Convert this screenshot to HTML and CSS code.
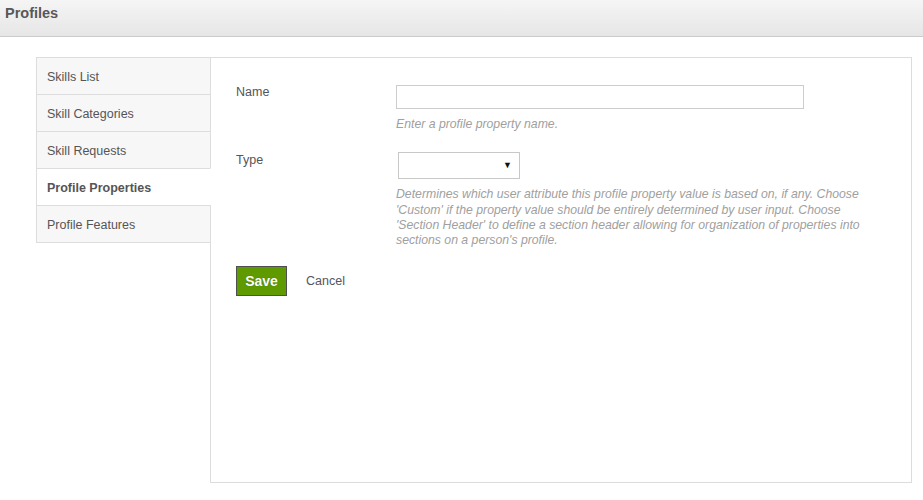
FILE: index.html
```html
<!DOCTYPE html>
<html>
<head>
<meta charset="utf-8">
<title>Profiles</title>
<link rel="stylesheet" href="styles.css">
</head>
<body>
<header class="page-header">
  <h1 class="page-title">Profiles</h1>
</header>
<div class="layout">
  <nav class="tabs">
    <a class="tab">Skills List</a>
    <a class="tab">Skill Categories</a>
    <a class="tab">Skill Requests</a>
    <a class="tab tab-active">Profile Properties</a>
    <a class="tab">Profile Features</a>
  </nav>
  <section class="panel">
    <div class="form-row row-name">
      <label class="field-label">Name</label>
      <div class="field">
        <input class="text-input" type="text">
        <div class="hint">Enter a profile property name.</div>
      </div>
    </div>
    <div class="form-row row-type">
      <label class="field-label">Type</label>
      <div class="field">
        <div class="select"><span class="select-arrow">&#9660;</span></div>
        <div class="hint hint-long">Determines which user attribute this profile property value is based on, if any. Choose 'Custom' if the property value should be entirely determined by user input. Choose 'Section Header' to define a section header allowing for organization of properties into sections on a person's profile.</div>
      </div>
    </div>
    <div class="actions">
      <button class="btn-save">Save</button>
      <a class="cancel">Cancel</a>
    </div>
  </section>
</div>
</body>
</html>
```
FILE: styles.css
```css
* { box-sizing: border-box; }
html, body { margin: 0; padding: 0; background: #fff; }
body { font-family: "Liberation Sans", Arial, sans-serif; color: #555; }

.page-header {
  height: 37px;
  background: linear-gradient(to bottom, #f5f5f5, #e6e6e6);
  border-bottom: 1px solid #cbcbcb;
  padding: 0 5px;
}
.page-title {
  margin: 0;
  font-size: 14.5px;
  font-weight: bold;
  line-height: 27px;
  color: #585858;
}

.layout {
  display: flex;
  margin: 20px 11px 0 36px;
}

.tabs {
  width: 175px;
  flex: none;
  margin-right: -1px;
  position: relative;
  z-index: 1;
  align-self: flex-start;
  display: flex;
  flex-direction: column;
}
.tab {
  display: block;
  height: 37px;
  line-height: 36px;
  padding-top: 1px;
  padding-left: 10px;
  border: 1px solid #ddd;
  border-bottom: none;
  background: #f7f7f7;
  font-size: 12.5px;
  color: #555;
}
.tab:last-child { border-bottom: 1px solid #ddd; height: 38px; }
.tab-active {
  background: #fff;
  border-right-color: #fff;
  font-weight: bold;
}

.panel {
  flex: 1;
  height: 426px;
  border: 1px solid #dcdcdc;
  padding: 27px 25px 0 25px;
}

.form-row {
  display: flex;
}
.field-label {
  width: 160px;
  flex: none;
  font-size: 12.5px;
  line-height: 15px;
  padding-top: 0;
  color: #555;
}
.field { flex: 1; }

.text-input {
  display: block;
  width: 408px;
  height: 24px;
  margin: 0;
  border: 1px solid #ccc;
  background: #fff;
  padding: 2px 4px;
  font-family: inherit;
}

.hint {
  font-style: italic;
  font-size: 12.25px;
  line-height: 15.3px;
  color: #a0a0a0;
  margin-top: 8px;
}
.hint-long { max-width: 485px; margin-top: 8px; }

.row-type { margin-top: 20px; }
.row-type .field-label { padding-top: 1px; }

.select {
  position: relative;
  width: 122px;
  height: 27px;
  margin-left: 2px;
  border: 1px solid #c8c8c8;
  background: #fff;
}
.select-arrow {
  position: absolute;
  right: 7px;
  top: 6px;
  font-size: 9px;
  line-height: 12px;
  color: #111;
}

.actions {
  display: flex;
  align-items: center;
  margin-top: 18px;
}
.btn-save {
  width: 51px;
  height: 30px;
  background: #5f9a00;
  border: 1px solid #4f4f4f;
  color: #fff;
  font-family: inherit;
  font-weight: bold;
  font-size: 14px;
  padding: 0;
  margin: 0;
  text-shadow: 0 0 1px rgba(0,0,0,0.35);
}
.cancel {
  margin-left: 19px;
  font-size: 12.5px;
  color: #55555e;
}
```
